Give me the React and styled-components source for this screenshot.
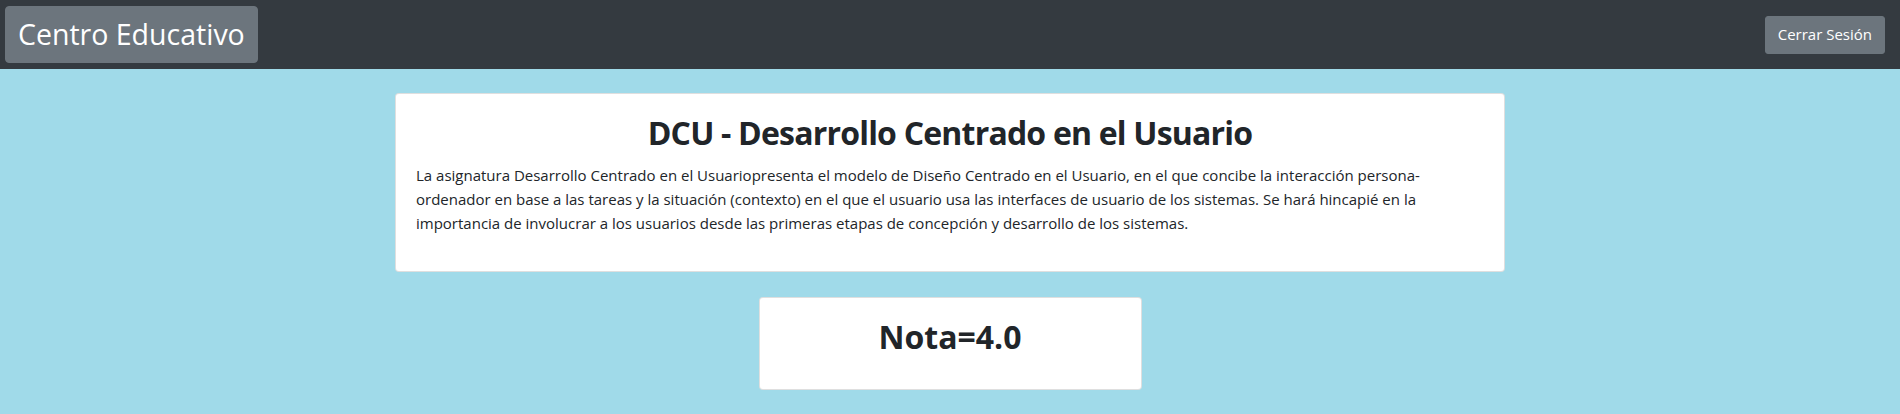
import React from 'react';
import styled, { createGlobalStyle } from 'styled-components';

const GlobalStyle = createGlobalStyle`
  html, body {
    margin: 0;
    padding: 0;
  }
  body {
    background: #a0dae9;
    font-family: "Open Sans", "Noto Sans", Arial, sans-serif;
    font-size: 16px;
    line-height: 1.5;
    color: #212529;
  }
  * {
    box-sizing: border-box;
  }
`;

const Navbar = styled.nav`
  height: 69px;
  background: #343a40;
  display: flex;
  justify-content: space-between;
  align-items: center;
  padding: 0 15px 0 5px;
`;

const Button = styled.button`
  font-family: inherit;
  color: #fff;
  background: #6c757d;
  border: 1px solid #6c757d;
  border-radius: ${(p) => (p.$large ? '4px' : '3px')};
  font-size: ${(p) => (p.$large ? '28.5px' : '15px')};
  line-height: 1.5;
  padding: ${(p) => (p.$large ? '5px 12px' : '6px 12px')};
  height: ${(p) => (p.$large ? '57px' : '38px')};
  display: flex;
  align-items: center;
  cursor: pointer;
`;

const Main = styled.main`
  display: flex;
  flex-direction: column;
  align-items: center;
  padding-top: 24px;
  gap: 25px;
`;

const Card = styled.section`
  width: ${(p) => p.$width};
  background: #fff;
  border: 1px solid rgba(0, 0, 0, 0.125);
  border-radius: 4px;
  padding: ${(p) => p.$padding || '20px'};
`;

const Title = styled.h2`
  margin: 0 0 ${(p) => (p.$gap ? '11px' : '0')};
  font-size: 32px;
  font-weight: 700;
  line-height: 1.2;
  letter-spacing: ${(p) => (p.$tight ? '-0.8px' : '0')};
  text-align: center;
`;

const Text = styled.p`
  margin: 0 12px 16px 0;
  font-size: 15px;
  line-height: 24px;
`;

export default function App() {
  return (
    <>
      <GlobalStyle />
      <Navbar>
        <Button $large>Centro Educativo</Button>
        <Button>Cerrar Sesión</Button>
      </Navbar>
      <Main>
        <Card $width="1110px">
          <Title $gap $tight>DCU - Desarrollo Centrado en el Usuario</Title>
          <Text>
            La asignatura Desarrollo Centrado en el Usuariopresenta el modelo de Diseño Centrado en el
            Usuario, en el que concibe la interacción persona-ordenador en base a las tareas y la
            situación (contexto) en el que el usuario usa las interfaces de usuario de los sistemas. Se
            hará hincapié en la importancia de involucrar a los usuarios desde las primeras etapas de
            concepción y desarrollo de los sistemas.
          </Text>
        </Card>
        <Card $width="383px" $padding="20px 20px 32px">
          <Title>Nota=4.0</Title>
        </Card>
      </Main>
    </>
  );
}
